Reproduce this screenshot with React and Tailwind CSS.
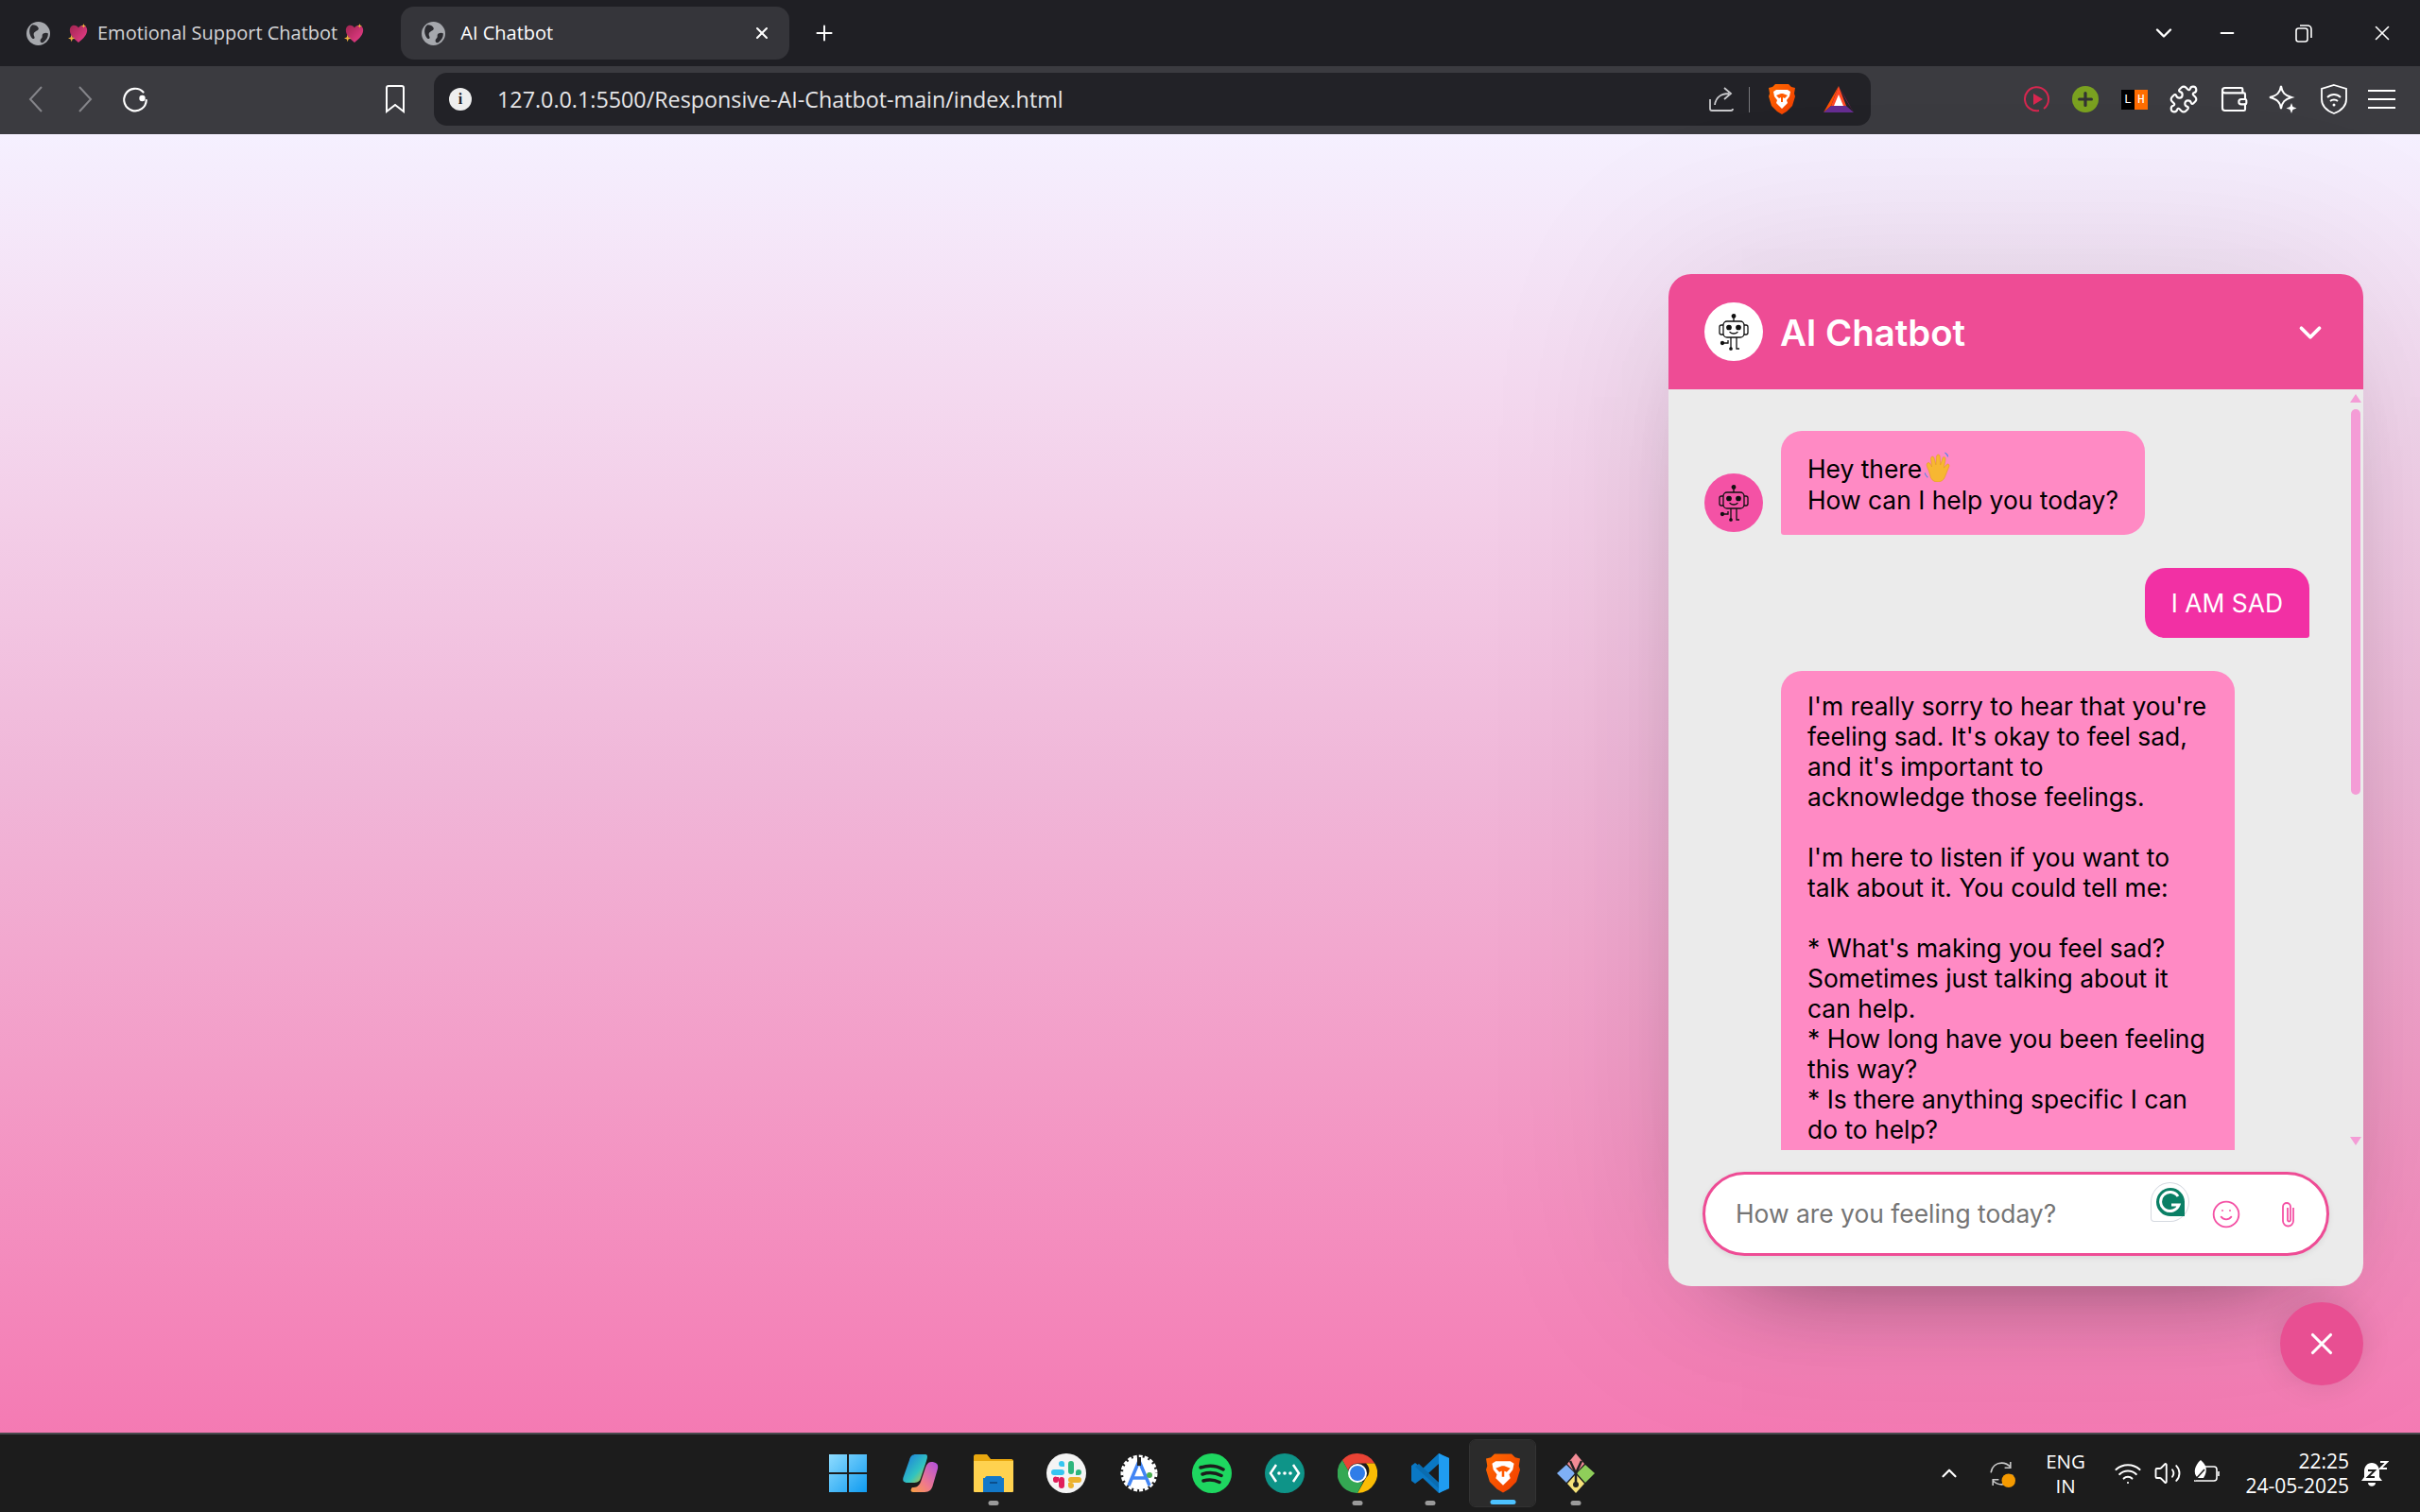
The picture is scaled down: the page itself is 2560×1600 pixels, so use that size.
import { ChevronDown, ChevronUp, Plus, X, Minus, Puzzle, Wallet, Smile, Wifi, Volume2 } from "lucide-react";

const ui = { fontFamily: '"Open Sans", "Noto Sans", sans-serif' };

function Globe({ className }) {
  return (
    <svg viewBox="0 0 24 24" className={className}>
      <circle cx="12" cy="12" r="12" fill="#a6a8ad" />
      <path d="M6 3c3 0 5 1 6 3s-1 3-3 4-2 3-1 5-1 3-2 2-3-4-3-7 1-6 3-7zM17 12c2-1 4-1 5 0 0 4-2 7-5 9-2 1-3 0-3-2s2-2 2-4 0-2 1-3z" fill="#2a2a2f" />
    </svg>
  );
}

function Heart({ className }) {
  return (
    <svg viewBox="0 0 24 24" className={className}>
      <defs>
        <linearGradient id="heartFill" x1="0" y1="0" x2="1" y2="1">
          <stop offset="0" stopColor="#a02450" />
          <stop offset="1" stopColor="#ec3f8c" />
        </linearGradient>
      </defs>
      <path d="M12 23C6 18 2 14 2 8.500 2 5 4.500 3 7 3c2 0 4 1 5 3 1-2 3-3 5-3 2.500 0 5 2 5 5.500C22 14 18 18 12 23z" fill="url(#heartFill)" />
      <path d="M4 14l1 3 3 1-3 1-1 3-1-3-3-1 3-1zM18 1l.7 2 2 .7-2 .7-.7 2-.7-2-2-.7 2-.7z" fill="#f0b040" />
    </svg>
  );
}

function BotIcon({ className }) {
  return (
    <svg viewBox="0 0 40 40" fill="none" stroke="#111" strokeWidth="1.300" className={className}>
      <circle cx="20" cy="3.500" r="1.800" fill="#111" />
      <path d="M20 5v4" />
      <rect x="9" y="9" width="22" height="17" rx="4" />
      <path d="M9 13H7a2 2 0 0 0-2 2v6a2 2 0 0 0 2 2h2M31 13h2a2 2 0 0 1 2 2v6a2 2 0 0 1-2 2h-2" />
      <circle cx="15" cy="15.500" r="2.200" fill="#111" />
      <circle cx="25" cy="15.500" r="2.200" fill="#111" />
      <path d="M16 20.500c2 2 6 2 8 0" strokeLinecap="round" />
      <path d="M17 26v12M23 26v12h3M14 29v3H8" />
      <circle cx="8" cy="32" r="1.500" fill="#111" />
      <circle cx="17" cy="38" r="1.200" fill="#111" />
    </svg>
  );
}

function WaveHand() {
  return (
    <svg viewBox="0 0 28 30" className="inline-block w-[32px] h-[32px] align-[-4px] ml-px">
      <path d="M5 19C3 15 2 12 4 11c2-1 3 2 4 4L7 7c0-3 3-3 3.500 0L12 13l.5-8c.5-3 3.500-3 3.500 0l.5 8 2-6c.5-3 3.500-2 3 1L20 16l2.500-3c1.500-2 3.500 0 2.500 2l-4 10c-2 6-11 7-14 1z" fill="#f7b732" stroke="#e09a1c" strokeWidth="0.500" />
      <path d="M1 21c.5 2 1.500 3.500 3 4.500M21 1c1.500 1 2.500 2 3 4" stroke="#4f86e8" strokeWidth="1" fill="none" />
    </svg>
  );
}

function Brave({ className }) {
  return (
    <svg viewBox="0 0 28 32" className={className}>
      <defs>
        <linearGradient id="braveFill" x1="0" y1="0" x2="1" y2="1">
          <stop offset="0" stopColor="#ff6a00" />
          <stop offset="1" stopColor="#f03a00" />
        </linearGradient>
      </defs>
      <path d="M7 0h14l3 3 4 1-1 6 1 3-3 10-6 6-5 3-5-3-6-6L0 13l1-3-1-6 4-1z" fill="url(#braveFill)" />
      <path d="M8 6h12l3 2-1 5-3 4 1 3-3 3-3 3-3-3-3-3 1-3-3-4-1-5z" fill="#fff" />
      <path d="M13 10l-5 2 3 3 2-1zM15 10l5 2-3 3-2-1zM13 10v9h2v-9z" fill="#ff5a00" />
    </svg>
  );
}

function Bat({ className }) {
  return (
    <svg viewBox="0 0 32 28" className={className}>
      <path d="M16 0L32 28 24 15z" fill="#9e1f63" />
      <path d="M16 0L0 28l8-7z" fill="#ff5000" />
      <path d="M16 0l8 21H8z" fill="#ff4724" />
      <path d="M16 9l5 12H11z" fill="#fff" />
      <path d="M0 28l8-7h16l8 7z" fill="#662d91" />
    </svg>
  );
}

function TaskIcon({ children, dot, active }) {
  return (
    <div className={`relative flex items-center justify-center h-[70px] rounded-md ${active ? "w-[69px] mx-[4px] bg-[#2b2b2b] outline-1 outline-[#333]" : "w-[77px]"}`}>
      {children}
      {dot && <span className="absolute bottom-[1px] left-1/2 -translate-x-1/2 w-[11px] h-[5px] rounded-full bg-[#9a9a9a]" />}
      {active && <span className="absolute bottom-[2px] left-1/2 -translate-x-1/2 w-[27px] h-[5px] rounded-full bg-[#4cc2ff]" />}
    </div>
  );
}

const tray = (
  <div className="ml-auto flex items-center h-full text-white text-[20.500px] leading-[26px]" style={ui}>
    <ChevronUp size={26} strokeWidth={2} className="mr-[28px]" />
    <svg viewBox="0 0 28 28" className="w-[29px] h-[29px] mr-[28px]" fill="none" stroke="#c9c9c9" strokeWidth="1.500">
      <path d="M3 13C4 6 9 3 14 3c4 0 7 2 9 4M23 2v6h-6M25 15c-1 7-6 10-11 10-4 0-7-2-9-4M5 26v-6h6" />
      <circle cx="21" cy="21" r="7" fill="#f59a00" stroke="none" />
    </svg>
    <div className="w-[50px] text-center mr-[26px]">
      <div>ENG</div>
      <div>IN</div>
    </div>
    <Wifi size={30} strokeWidth={1.700} className="mr-[12px]" />
    <Volume2 size={30} strokeWidth={1.500} className="mr-[11px]" />
    <svg viewBox="0 0 30 28" className="w-[30px] h-[28px] mr-[16px]" fill="none" stroke="#fff" strokeWidth="1.600">
      <path d="M8 7h15a3 3 0 0 1 3 3v9a3 3 0 0 1-3 3H2M28 12v5" />
      <path d="M9 0c6 5 8 11 3 19H6C0 14 3 5 9 0z" fill="#fff" stroke="none" />
      <path d="M3 21L13 10" stroke="#1c1c1c" />
    </svg>
    <div className="text-right w-[120px] mr-[12px] text-[21px]">
      <div>22:25</div>
      <div>24-05-2025</div>
    </div>
    <svg viewBox="0 0 30 28" className="w-[30px] h-[28px] mr-[33px]" fill="none">
      <path d="M12 3c5 0 8 4 8 9v6l3 4H1l3-4v-6c0-5 3-9 8-9zM8 24h8c0 5-8 5-8 0z" fill="#fff" />
      <path d="M8 11h7l-7 7h7" stroke="#1c1c1c" strokeWidth="2" />
      <path d="M21 2h7l-7 7h7" stroke="#fff" strokeWidth="2" />
    </svg>
  </div>
);

export default function App() {
  return (
    <div className="flex flex-col w-[2560px] h-[1600px] overflow-hidden" style={{ fontFamily: 'Inter, sans-serif' }}>
      {/* tab strip */}
      <div className="flex items-center h-[70px] shrink-0 bg-[#1f1f24] text-[#d5d5d8]" style={ui}>
        <Globe className="ml-[28px] w-[25px] h-[25px]" />
        <Heart className="ml-[19px] w-[22px] h-[22px]" />
        <span className="ml-[9px] text-[20px] whitespace-nowrap">Emotional Support Chatbot</span>
        <Heart className="ml-[7px] w-[22px] h-[22px]" />
        <div className="ml-[38px] flex items-center w-[411px] h-[56px] rounded-[14px] bg-[#35353a] text-white">
          <Globe className="ml-[22px] w-[25px] h-[25px]" />
          <span className="ml-[16px] text-[20px]">AI Chatbot</span>
          <X size={20} strokeWidth={2.500} className="ml-auto mr-[19px]" />
        </div>
        <Plus size={26} strokeWidth={1.800} className="ml-[24px] text-white" />
        <div className="ml-auto flex items-center text-white">
          <ChevronDown size={28} strokeWidth={2} className="mr-[42px]" />
          <Minus size={22} strokeWidth={2} className="mr-[60px]" />
          <svg viewBox="0 0 20 20" className="w-[20px] h-[20px] mr-[60px]" fill="none" stroke="#fff" strokeWidth="1.600">
            <rect x="2" y="5" width="12" height="14" rx="2.500" />
            <path d="M6 2h8a4 4 0 0 1 4 4v9" />
          </svg>
          <X size={26} strokeWidth={1.500} className="mr-[27px]" />
        </div>
      </div>

      {/* toolbar */}
      <div className="flex items-center h-[72px] pb-[2px] shrink-0 bg-[#3b3b40] text-white">
        <svg viewBox="0 0 18 28" className="ml-[29px] w-[18px] h-[28px]" fill="none" stroke="#85858a" strokeWidth="2">
          <path d="M15 1L3 14l12 13" />
        </svg>
        <svg viewBox="0 0 18 28" className="ml-[34px] w-[18px] h-[28px]" fill="none" stroke="#85858a" strokeWidth="2">
          <path d="M3 1l12 13L3 27" />
        </svg>
        <svg viewBox="0 0 28 28" className="ml-[29px] w-[30px] h-[30px]" fill="none" stroke="#fff" strokeWidth="2">
          <path d="M22 7a11 11 0 1 0 3 8" strokeLinecap="round" />
          <circle cx="21" cy="13" r="3" fill="#fff" stroke="none" />
        </svg>
        <svg viewBox="0 0 22 30" className="ml-[249px] w-[22px] h-[30px]" fill="none" stroke="#fff" strokeWidth="2">
          <path d="M2 3a2 2 0 0 1 2-2h14a2 2 0 0 1 2 2v25l-9-7-9 7z" />
        </svg>
        <div className="ml-[30px] flex items-center w-[1520px] h-[56px] rounded-[14px] bg-[#222227]">
          <span className="ml-[16px] flex items-center justify-center w-[24px] h-[24px] rounded-full bg-[#eee] text-[#222] text-[16px] font-bold" style={{ fontFamily: '"Liberation Serif", serif' }}>i</span>
          <span className="ml-[27px] text-[23.300px] text-[#e6e6e8] whitespace-nowrap" style={ui}>127.0.0.1:5500/Responsive-AI-Chatbot-main/index.html</span>
          <svg viewBox="0 0 28 28" className="ml-auto w-[28px] h-[28px]" fill="none" stroke="#c8c8cb" strokeWidth="1.800">
            <path d="M2 14v10a2 2 0 0 0 2 2h20a2 2 0 0 0 2-2M7 20c1-8 7-12 15-12M17 2l7 6-7 6" />
          </svg>
          <span className="ml-[15px] w-px h-[27px] bg-[#77777b]" />
          <Brave className="ml-[20px] w-[28px] h-[32px]" />
          <Bat className="ml-[30px] w-[32px] h-[28px] mr-[18px]" />
        </div>
        <svg viewBox="0 0 28 28" className="ml-[162px] w-[28px] h-[28px]" fill="none" stroke="#d8264f" strokeWidth="2">
          <path d="M16 26A12.500 12.500 0 1 1 26 14c0 4-2 8-5 10" />
          <path d="M10 8l10 6-10 6z" fill="#d8264f" stroke="none" />
        </svg>
        <div className="ml-[23px] flex items-center justify-center w-[28px] h-[28px] rounded-full bg-[#7aa120] text-[#333]">
          <Plus size={22} strokeWidth={3.500} />
        </div>
        <div className="ml-[24px] flex w-[28px] h-[21px] text-[13px] leading-[21px] text-center" style={{ fontFamily: '"Liberation Mono", monospace' }}>
          <span className="w-[14px] bg-black">L</span>
          <span className="w-[14px] bg-[#ff6d00]">H</span>
        </div>
        <Puzzle size={32} strokeWidth={1.600} className="ml-[22px]" />
        <Wallet size={32} strokeWidth={1.600} className="ml-[21px]" />
        <svg viewBox="0 0 32 32" className="ml-[20px] w-[32px] h-[32px]" fill="none" stroke="#fff" strokeWidth="2">
          <path d="M14 2c1 7 4 10 11 12-7 2-10 5-11 12-1-7-4-10-12-12 8-2 11-5 12-12z" />
          <path d="M25 20l1.500 4 4 1.500-4 1.500-1.500 4-1.500-4-4-1.500 4-1.500z" fill="#fff" stroke="none" />
        </svg>
        <svg viewBox="0 0 30 32" className="ml-[23px] w-[30px] h-[32px]" fill="none" stroke="#fff" strokeWidth="1.800">
          <path d="M15 1l13 4v11c0 7-5 12-13 15C7 28 2 23 2 16V5z" />
          <path d="M8 14c4-4 10-4 14 0M11 18c2-2 6-2 8 0" />
          <circle cx="15" cy="22" r="1.500" fill="#fff" stroke="none" />
        </svg>
        <div className="ml-[21px] flex flex-col gap-[7px] w-[29px]">
          <span className="h-[2px] bg-white" />
          <span className="h-[2px] bg-white" />
          <span className="h-[2px] bg-white" />
        </div>
      </div>

      {/* page */}
      <div className="flex-1 flex flex-col items-end pt-[148px] pr-[60px] bg-linear-to-b from-[#f5f0ff] via-[#f0b6d8] to-[#f47ab3]">
        <div className="flex flex-col w-[735px] h-[1071px] rounded-[24px] overflow-hidden bg-[#ebebeb] shadow-[0_0_209px_rgba(0,0,0,0.1),0_52px_105px_-78px_rgba(0,0,0,0.6)]">
          <div className="flex items-center h-[122px] shrink-0 pl-[38px] pr-[37px] bg-[#ee4c95]">
            <div className="flex items-center justify-center w-[62px] h-[62px] rounded-full bg-white">
              <BotIcon className="w-[40px] h-[40px]" />
            </div>
            <h2 className="ml-[18px] mt-[3px] text-[38.300px] font-semibold text-white">AI Chatbot</h2>
            <ChevronDown size={38} strokeWidth={2.400} className="ml-auto mt-[1px] text-white" />
          </div>

          <div className="flex h-[805px] shrink-0 overflow-hidden">
            <div className="flex-1 flex flex-col gap-[35px] pt-[44px] pl-[38px] pr-[43px] text-[26.400px] leading-[32px] text-black">
              <div className="flex items-end gap-[19px]">
                <div className="flex items-center justify-center w-[62px] h-[62px] mb-[3px] rounded-full bg-[#f452a5]">
                  <BotIcon className="w-[40px] h-[40px]" />
                </div>
                <div className="h-[110px] px-[28px] pt-[22px] rounded-[22px] rounded-bl-[3px] bg-[#ff8ac4] leading-[33px]">
                  Hey there<WaveHand />
                  <br />
                  How can I help you today?
                </div>
              </div>
              <div className="self-end mr-[1px] px-[28px] py-[21px] rounded-[22px] rounded-br-[3px] bg-[#f230a4] text-white">I AM SAD</div>
              <div className="ml-[81px] w-[480px] shrink-0 px-[28px] pt-[21px] pb-[80px] rounded-[22px] bg-[#ff8ac4] whitespace-pre-line">
                {"I'm really sorry to hear that you're feeling sad. It's okay to feel sad, and it's important to\nacknowledge those feelings.\n\nI'm here to listen if you want to talk about it. You could tell me:\n\n* What's making you feel sad? Sometimes just talking about it can help.\n* How long have you been feeling this way?\n* Is there anything specific I can do to help?"}
              </div>
            </div>
            {/* scrollbar */}
            <div className="flex flex-col items-center w-[10px] mr-[3px] pt-[5px] shrink-0">
              <span className="w-0 h-0 border-x-[6px] border-x-transparent border-b-[9px] border-b-[#f49cd6]" />
              <span className="mt-[7px] w-[10px] h-[408px] rounded-full bg-[#f49cd6]" />
              <span className="mt-auto mb-[5px] w-0 h-0 border-x-[6px] border-x-transparent border-t-[9px] border-t-[#f49cd6]" />
            </div>
          </div>

          <div className="relative flex items-center h-[89px] mx-[36px] mt-[23px] pl-[32px] pr-[31px] rounded-full border-[3px] border-[#ee4c95] bg-white shadow-[0_2px_6px_rgba(0,0,0,0.08)]">
            <input readOnly placeholder="How are you feeling today?" className="flex-1 min-w-0 bg-transparent outline-none text-[26.400px] placeholder:text-[#757575]" />
            <Smile size={32} strokeWidth={1.400} className="mr-[41px] text-[#f452a5]" />
            <svg viewBox="0 0 18 28" className="w-[18px] h-[28px]" fill="none" stroke="#f452a5" strokeWidth="1.800">
              <path d="M14 7v14a5.500 5.500 0 0 1-11 0V6a4 4 0 0 1 8 0v14a1.500 1.500 0 0 1-3 0V7" />
            </svg>
            <span className="absolute left-[471px] top-[8px] flex items-center justify-center w-[41px] h-[42px] rounded-[50%_50%_50%_4px] bg-white border border-[#d5d9e0]">
              <svg viewBox="0 0 32 32" className="w-[32px] h-[32px]">
                <path d="M16 1a15 15 0 0 1 15 15v15H16A15 15 0 0 1 16 1z" fill="#0a7f65" />
                <path d="M24 10a10 10 0 1 0 1 9h-8" fill="none" stroke="#fff" strokeWidth="3" />
              </svg>
            </span>
          </div>
        </div>

        <div className="flex items-center justify-center w-[88px] h-[88px] mt-[17px] rounded-full bg-[#e84f92] shadow-[0_0_33px_rgba(0,0,0,0.1)]">
          <X size={38} strokeWidth={2} className="text-white" />
        </div>
      </div>

      {/* taskbar */}
      <div className="flex items-center h-[84px] shrink-0 pl-[858px] border-t-2 border-t-[#4a4a4e] bg-[#1c1c1c]">
        <TaskIcon>
          <svg viewBox="0 0 42 42" className="w-[42px] h-[42px]">
            <defs>
              <linearGradient id="winFill" x1="0" y1="0" x2="1" y2="1">
                <stop offset="0" stopColor="#8fdcff" />
                <stop offset="1" stopColor="#0f9bf0" />
              </linearGradient>
            </defs>
            <path d="M1 1h19v19H1zM22 1h19v19H22zM1 22h19v19H1zM22 22h19v19H22z" fill="url(#winFill)" />
          </svg>
        </TaskIcon>
        <TaskIcon>
          <svg viewBox="0 0 42 42" className="w-[42px] h-[42px]">
            <defs>
              <linearGradient id="copA" x1="0" y1="0" x2="1" y2="1">
                <stop offset="0" stopColor="#1b76e0" />
                <stop offset="0.6" stopColor="#31c4c0" />
                <stop offset="1" stopColor="#e8c820" />
              </linearGradient>
              <linearGradient id="copB" x1="1" y1="0" x2="0" y2="1">
                <stop offset="0" stopColor="#b04fe0" />
                <stop offset="0.6" stopColor="#f07a8a" />
                <stop offset="1" stopColor="#f8a040" />
              </linearGradient>
            </defs>
            <path d="M16 1h10c3 0 2 4 1 7l-6 18c-1 4-4 5-8 5H7c-4 0-6-2-4-7l6-17c1-4 3-6 7-6z" fill="url(#copA)" />
            <path d="M32 9c5 0 8 2 7 7l-5 17c-1 5-4 8-9 8H13c-3 0-3-3-1-5 4 0 7-1 9-6l5-15c1-3 3-6 6-6z" fill="url(#copB)" />
          </svg>
        </TaskIcon>
        <TaskIcon dot>
          <svg viewBox="0 0 42 42" className="w-[42px] h-[42px]">
            <path d="M0 3c0-1 1-2 2-2h12l4 5h22c1 0 2 1 2 2v4H0z" fill="#e9a80f" />
            <path d="M0 8h42v32a1 1 0 0 1-1 1H1a1 1 0 0 1-1-1z" fill="#ffd24f" />
            <path d="M12 26c0-1 1-2 2-2h14c1 0 2 1 2 2h2v15H10V26z" fill="#1378c8" />
            <path d="M17 31h8" stroke="#0b4f8c" strokeWidth="2" />
          </svg>
        </TaskIcon>
        <TaskIcon>
          <svg viewBox="0 0 42 42" className="w-[42px] h-[42px]">
            <circle cx="21" cy="21" r="21" fill="#f4f4f4" />
            <path d="M16 8a3 3 0 0 1 3 3v3h-3a3 3 0 0 1 0-6zM8 17h8a3 3 0 0 1 0 6H8a3 3 0 0 1 0-6z" fill="#36c5f0" />
            <path d="M23 11a3 3 0 0 1 6 0v8a3 3 0 0 1-6 0zM34 17a3 3 0 0 1 0 6h-3v-3a3 3 0 0 1 3-3z" fill="#2eb67d" />
            <path d="M26 25h8a3 3 0 0 1 0 6h-8a3 3 0 0 1 0-6zM26 37a3 3 0 0 1-3-3v-3h3a3 3 0 0 1 0 6z" fill="#ecb22e" />
            <path d="M8 25a3 3 0 0 1 3 0h2v3a3 3 0 0 1-6 0 3 3 0 0 1 1-3zM13 28a3 3 0 0 1 6 0v6a3 3 0 0 1-6 0z" fill="#e01e5a" />
          </svg>
        </TaskIcon>
        <TaskIcon>
          <svg viewBox="0 0 42 42" className="w-[42px] h-[42px]">
            <circle cx="21" cy="21" r="17" fill="#fff" />
            <circle cx="21" cy="21" r="18" fill="none" stroke="#fff" strokeWidth="3" strokeDasharray="4 2" />
            <path d="M21 8l-11 26M21 8l11 26M14 26h14" stroke="#4285f4" strokeWidth="3.500" fill="none" />
            <path d="M19 4h4v9h-4z" fill="#222" />
            <circle cx="32" cy="23" r="3" fill="#4caf50" />
          </svg>
        </TaskIcon>
        <TaskIcon>
          <svg viewBox="0 0 42 42" className="w-[42px] h-[42px]">
            <circle cx="21" cy="21" r="21" fill="#1ed760" />
            <path d="M9 15c8-2.500 17-2 24 2M11 22c6-2 14-1.500 20 1.500M12 29c5-1.500 12-1 17 1.500" stroke="#1c1c1c" strokeWidth="3.500" strokeLinecap="round" fill="none" />
          </svg>
        </TaskIcon>
        <TaskIcon>
          <svg viewBox="0 0 42 42" className="w-[42px] h-[42px]">
            <circle cx="21" cy="21" r="21" fill="#0e9488" />
            <path d="M12 12l-6 9 6 9M30 12l6 9-6 9" stroke="#fff" strokeWidth="2.500" fill="none" />
            <circle cx="15" cy="21" r="1.800" fill="#fff" />
            <circle cx="21" cy="21" r="1.800" fill="#fff" />
            <circle cx="27" cy="21" r="1.800" fill="#fff" />
          </svg>
        </TaskIcon>
        <TaskIcon dot>
          <svg viewBox="0 0 42 42" className="w-[42px] h-[42px]">
            <path d="M21 0a21 21 0 0 1 18.200 10.500H21a10.500 10.500 0 0 0-10 7.500L5 7A21 21 0 0 1 21 0z" fill="#ea4335" />
            <path d="M39.200 10.500A21 21 0 0 1 21 42l9-16a10.500 10.500 0 0 0 0-15.500z" fill="#fbbc04" />
            <path d="M21 42A21 21 0 0 1 5 7l9 16a10.500 10.500 0 0 0 13 7z" fill="#34a853" />
            <circle cx="21" cy="21" r="10" fill="#fff" />
            <circle cx="21" cy="21" r="8" fill="#2f7de8" />
          </svg>
        </TaskIcon>
        <TaskIcon dot>
          <svg viewBox="0 0 42 42" className="w-[42px] h-[42px]">
            <path d="M30 0l11 5v32l-11 5-17-16-8 6-4-3v-16l4-3 8 6z" fill="#0a78c4" />
            <path d="M30 0l11 5v32l-11 5z" fill="#1f9cf0" />
            <path d="M30 11v20L19 21z" fill="#1c1c1c" />
            <path d="M5 14l25 23v-6L9 11z" fill="#0a6cb0" />
          </svg>
        </TaskIcon>
        <TaskIcon active>
          <Brave className="w-[36px] h-[42px]" />
        </TaskIcon>
        <TaskIcon dot>
          <svg viewBox="0 0 42 42" className="w-[42px] h-[42px]">
            <path d="M21 0l9 11-9 10-9-10z" fill="#f28b95" />
            <path d="M31 12l10 9-10 10-9-10z" fill="#8fce5a" />
            <path d="M21 22l9 10-9 10-9-10z" fill="#f6e27a" />
            <path d="M11 12l9 9-9 10L1 21z" fill="#7fb0f5" />
            <path d="M15 8l6 13 6-13M21 21v12" stroke="#222" strokeWidth="2.500" fill="none" />
            <circle cx="21" cy="33" r="3" fill="#222" />
          </svg>
        </TaskIcon>
        {tray}
      </div>
    </div>
  );
}
